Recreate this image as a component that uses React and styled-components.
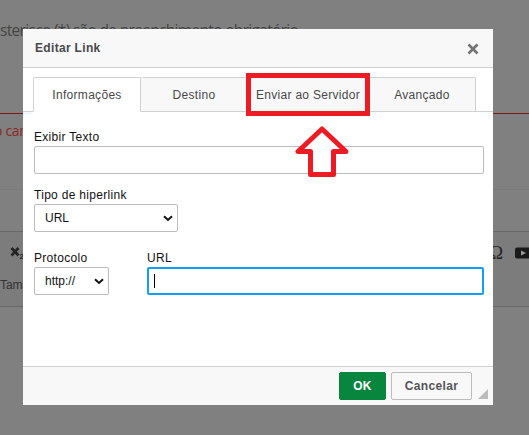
import React from "react";
import styled, { createGlobalStyle } from "styled-components";

const Global = createGlobalStyle`
  * { box-sizing: border-box; }
  body { margin: 0; background: #808080; overflow: hidden; }
`;

const Page = styled.main`
  position: relative;
  width: 529px;
  height: 435px;
  overflow: hidden;
  background: #808080;
  color: #3a3a3a;
  font-family: "Liberation Sans", Arial, sans-serif;
`;

const Intro = styled.p`
  margin: 0;
  height: 113px;
  padding-top: 20px;
  font: 15.5px/20px "Open Sans", sans-serif;
  letter-spacing: -0.68px;
  color: #444;
  white-space: nowrap;
`;

const FieldError = styled.div`
  height: 76px;
  border-top: 1px solid #7c1a17;
  padding-top: 9px;
  font: 14px/16px "Open Sans", sans-serif;
  text-indent: -6px;
  letter-spacing: -0.3px;
  color: #8c2824;
`;

const EditorTop = styled.div`
  height: 42px;
  border-top: 1px solid #7b7b7b;
`;

const EditorBar = styled.div`
  display: grid;
  grid-template-rows: 42px 1fr;
  height: 76px;
  border-top: 1px solid #686868;
  border-bottom: 1px solid #686868;
  background: #7c7c7c;
`;

const ToolRow = styled.div`
  display: flex;
  justify-content: space-between;
  align-items: center;
  padding-left: 10px;
`;

const ToolGroup = styled.div`
  display: flex;
  align-items: center;
  gap: 12px;
  height: 20px;
  color: #252525;
`;

const Omega = styled.span`
  font: 19px/20px "Liberation Serif", serif;
`;

const SizeLabel = styled.span`
  padding-top: 1px;
  font-size: 12px;
  line-height: 20px;
  letter-spacing: -0.1px;
  color: #333;
`;

const Dialog = styled.section`
  position: absolute;
  left: 23px;
  top: 29px;
  width: 470px;
  height: 376px;
  display: flex;
  flex-direction: column;
  background: #fff;
  font-size: 12px;
  letter-spacing: 0.3px;
  color: #111;
`;

const Header = styled.header`
  display: flex;
  justify-content: space-between;
  height: 39px;
  padding: 12px 14px 0 12px;
  border-bottom: 1px solid #d1d1d1;
  background: #f8f8f8;
`;

const Title = styled.h1`
  margin: 0;
  font-size: 12px;
  line-height: 14px;
  letter-spacing: 0.32px;
  color: #484848;
`;

const CloseButton = styled.button`
  display: flex;
  width: 12px;
  height: 14px;
  padding: 2px 0 0;
  border: 0;
  background: none;
`;

const Tabs = styled.nav`
  display: flex;
  height: 44px;
  padding: 9px 0 0 10px;
  box-shadow: inset 0 -1px #d1d1d1;
`;

const Tab = styled.button`
  width: ${(p) => p.$width}px;
  height: 35px;
  padding: 1px 0 0;
  border: 1px solid #d1d1d1;
  border-left-width: ${(p) => (p.$active ? 1 : 0)}px;
  border-bottom-color: ${(p) => (p.$active ? "#fff" : "#d1d1d1")};
  border-radius: 2px 2px 0 0;
  background: ${(p) => (p.$active ? "#fff" : "#f8f8f8")};
  font: 12px "Liberation Sans", Arial, sans-serif;
  letter-spacing: 0.3px;
  color: #484848;
  white-space: nowrap;
`;

const Form = styled.form`
  flex: 1;
  padding: 18px 9px 0 11px;
`;

const Field = styled.div`
  width: ${(p) => p.$width}px;
  margin-bottom: ${(p) => p.$gap || 0}px;
  line-height: 14px;
`;

const Columns = styled.div`
  display: flex;
  gap: 38px;
`;

const Control = styled.span`
  display: flex;
  align-items: center;
  justify-content: space-between;
  height: 28px;
  margin-top: 2px;
  padding: 0 ${(p) => (p.$focus ? 5 : 4)}px 0 ${(p) => (p.$focus ? 5 : 10)}px;
  border: ${(p) => (p.$focus ? "2px solid #139ff7" : "1px solid #bcbcbc")};
  border-radius: 2px;
  letter-spacing: 0;
`;

const Caret = styled.i`
  width: 1px;
  height: 14px;
  background: #000;
`;

const Footer = styled.footer`
  display: flex;
  justify-content: flex-end;
  gap: 5px;
  height: 39px;
  padding: 5px 5px 0 0;
  border-top: 1px solid #d1d1d1;
  background: #f8f8f8;
`;

const Button = styled.button`
  width: ${(p) => p.$width}px;
  height: 28px;
  padding: 0;
  border: 1px solid ${(p) => (p.$primary ? "#09863e" : "#bcbcbc")};
  border-radius: 2px;
  background: ${(p) => (p.$primary ? "#09863e" : "#f8f8f8")};
  color: ${(p) => (p.$primary ? "#fff" : "#555")};
  font: bold 12px "Liberation Sans", Arial, sans-serif;
  letter-spacing: 0.35px;
`;

const Resize = styled.svg`
  margin: 17px 0 0 1px;
  flex: none;
`;

const Marker = styled.div`
  position: absolute;
  left: 246px;
  top: 73px;
  width: 124px;
  height: 43px;
  border: 5px solid #ed1c24;
`;

const Arrow = styled.svg`
  position: absolute;
  left: 295px;
  top: 125px;
`;

const Chevron = () => (
  <svg width="10" height="8" viewBox="0 0 10 8">
    <path d="M1 2.3 5 6 9 2.3" fill="none" stroke="#111" strokeWidth="2" />
  </svg>
);

const TABS = [
  ["Informações", 108, true],
  ["Destino", 107],
  ["Enviar ao Servidor", 121],
  ["Avançado", 107],
];

export default function App() {
  return (
    <Page>
      <Global />
      <Intro>sterisco (*) são de preenchimento obrigatório.</Intro>
      <FieldError>o campo</FieldError>
      <EditorTop />
      <EditorBar>
        <ToolRow>
          <ToolGroup>
            <svg width="18" height="16" viewBox="0 0 18 16">
              <path d="M1.5 3 8.5 10.5M8.5 3 1.5 10.5" stroke="#252525" strokeWidth="2.7" />
              <text x="9.5" y="14" fontSize="8" fontWeight="bold" fill="#252525">2</text>
            </svg>
          </ToolGroup>
          <ToolGroup>
            <Omega>Ω</Omega>
            <svg width="14" height="12" viewBox="0 0 14 12">
              <rect y="0.5" width="18" height="11" rx="2" fill="#1a1a1a" />
              <path d="M6 3.5v5l5-2.5z" fill="#999" />
            </svg>
          </ToolGroup>
        </ToolRow>
        <SizeLabel>Tamanho</SizeLabel>
      </EditorBar>
      <Dialog>
        <Header>
          <Title>Editar Link</Title>
          <CloseButton aria-label="Fechar">
            <svg width="12" height="12" viewBox="0 0 12 12">
              <path d="M1.5 1.5 10.5 10.5M10.5 1.5 1.5 10.5" stroke="#757575" strokeWidth="2.7" />
            </svg>
          </CloseButton>
        </Header>
        <Tabs>
          {TABS.map(([name, width, active]) => (
            <Tab key={name} $width={width} $active={active}>{name}</Tab>
          ))}
        </Tabs>
        <Form>
          <Field $width={450} $gap={14}>Exibir Texto<Control /></Field>
          <Field $width={144} $gap={19}>
            Tipo de hiperlink<Control>URL<Chevron /></Control>
          </Field>
          <Columns>
            <Field $width={75}>Protocolo<Control>http://<Chevron /></Control></Field>
            <Field $width={337}>URL<Control $focus><Caret /></Control></Field>
          </Columns>
        </Form>
        <Footer>
          <Button $width={47} $primary>OK</Button>
          <Button $width={81}>Cancelar</Button>
          <Resize width="10" height="10" viewBox="0 0 10 10"><path d="M10 0v10H0z" fill="#bcbcbc" /></Resize>
        </Footer>
      </Dialog>
      <Marker />
      <Arrow width="54" height="54" viewBox="0 0 54 54">
        <path d="M27 4 3 26.5H15.5V49.5H38.5V26.5H51Z" fill="#fff" stroke="#ed1c24" strokeWidth="5" strokeLinejoin="round" />
      </Arrow>
    </Page>
  );
}
